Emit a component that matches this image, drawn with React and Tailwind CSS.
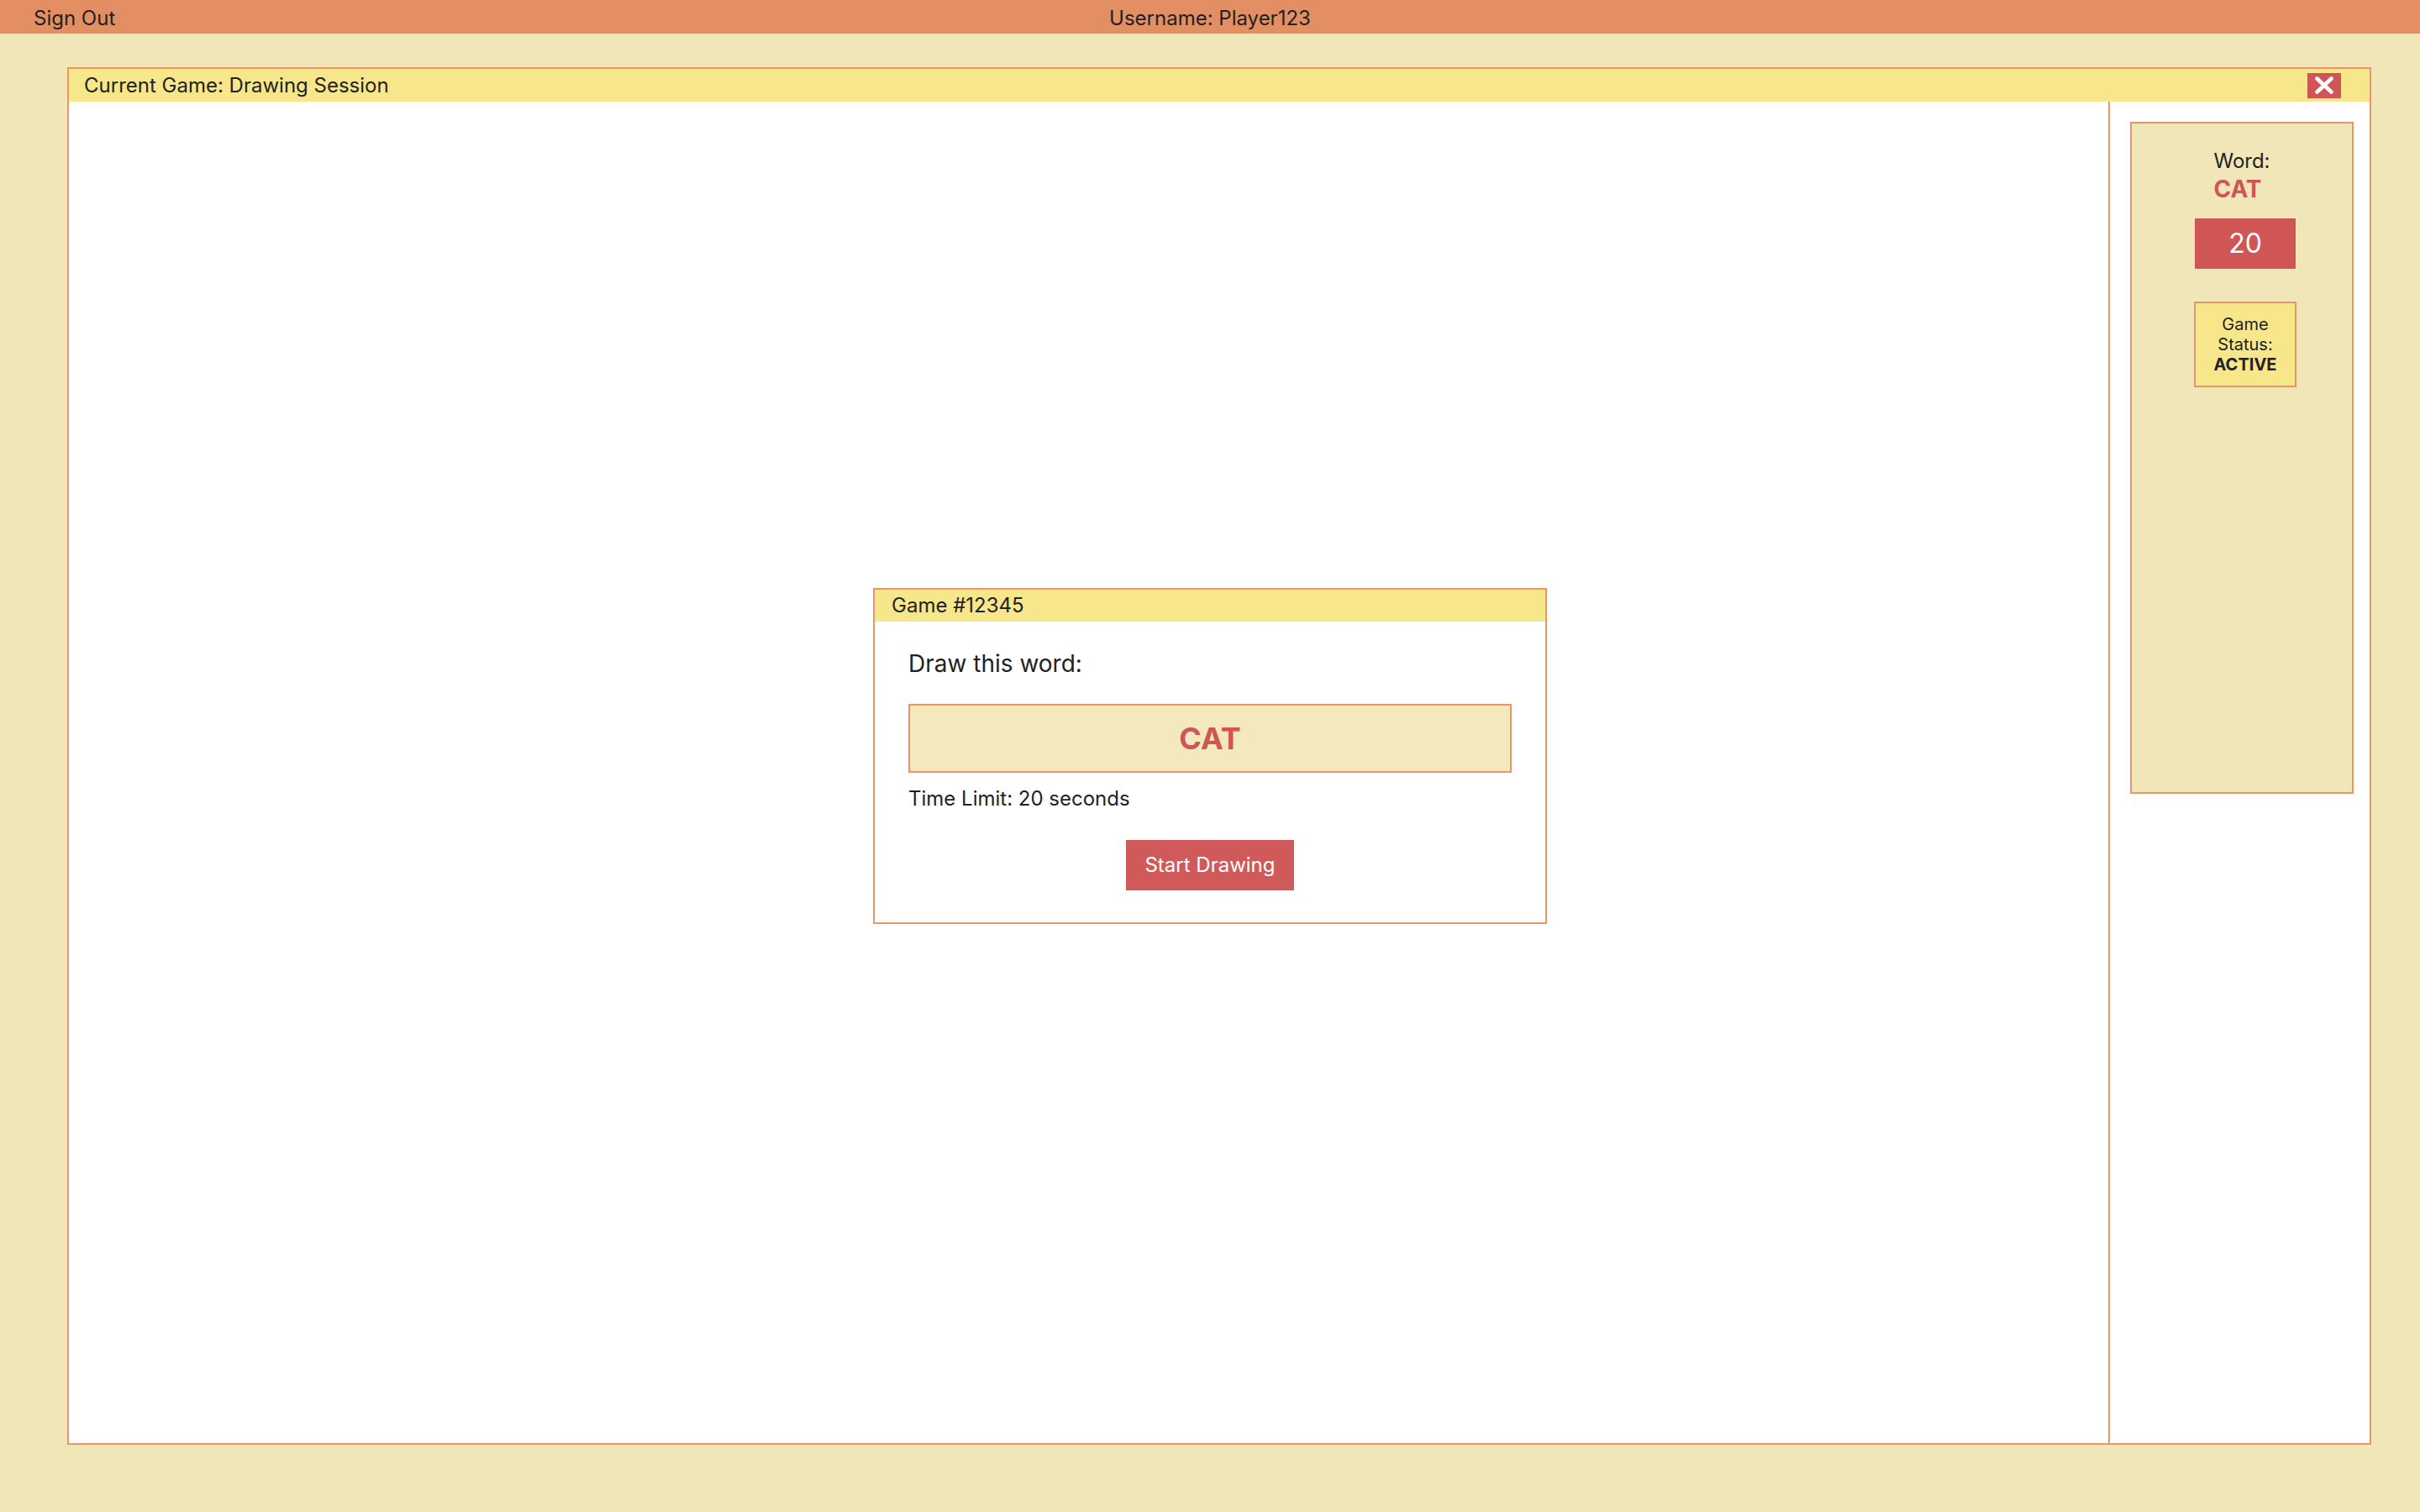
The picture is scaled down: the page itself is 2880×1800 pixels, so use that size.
import React from "react";

const CloseIcon = () => (
    <svg width="22" height="21" viewBox="0 0 22 21" fill="none">
        <path d="M2.5 2.5L19.5 18.5M19.5 2.5L2.5 18.5" stroke="white" strokeWidth="4.5" strokeLinecap="round" />
    </svg>
);

const App = () => {
    return (
        <div className="h-screen w-full flex flex-col bg-[#f0e6b8] text-[#222222] font-['Inter','Noto_Sans',sans-serif] overflow-hidden">
            {/* Top bar */}
            <header className="h-10 flex-shrink-0 bg-[#e48f63] grid grid-cols-3 px-10 pt-[3px] text-[24px] leading-[37px]">
                <span>Sign Out</span>
                <span className="text-center">Username: Player123</span>
                <span></span>
            </header>

            {/* Game window */}
            <div className="flex-1 min-h-0 mt-10 mb-20 ml-20 mr-[58px] bg-white border-2 border-[#e8956a] flex flex-col">
                <div className="h-[39px] flex-shrink-0 bg-[#f8e68a] flex items-center justify-between pl-[18px] pr-[34px]">
                    <span className="text-[24px] leading-8">Current Game: Drawing Session</span>
                    <button className="w-10 h-[30px] bg-[#d05555] flex items-center justify-center">
                        <CloseIcon />
                    </button>
                </div>

                <div className="flex-1 min-h-0 flex">
                    {/* Canvas */}
                    <div className="flex-1 bg-white border-r-2 border-[#e8956a]"></div>

                    {/* Sidebar */}
                    <aside className="w-[309px] flex-shrink-0 bg-white pl-6 pr-[19px] pt-6">
                        <div className="h-[800px] bg-[#f0e6b8] border-2 border-[#e8956a] pt-[29px] flex flex-col items-center">
                            <div className="text-left">
                                <p className="text-[24px] leading-8">Word:</p>
                                <p className="text-[28px] leading-[34px] font-bold text-[#d05555]">CAT</p>
                            </div>
                            <div className="mt-[18px] ml-2 w-[120px] h-[60px] bg-[#d05555] text-white flex items-center justify-center text-[32px]">
                                20
                            </div>
                            <div className="mt-[39px] ml-2 w-[122px] bg-[#f8e68a] border-2 border-[#e8956a] py-[13px] text-center text-[20px] leading-6">
                                <p>Game</p>
                                <p>Status:</p>
                                <p className="font-bold">ACTIVE</p>
                            </div>
                        </div>
                    </aside>
                </div>
            </div>

            {/* Modal */}
            <div className="fixed inset-0 flex items-center justify-center pointer-events-none">
                <div className="w-[802px] bg-white border-2 border-[#e8956a] pointer-events-auto">
                    <div className="h-[38px] bg-[#f8e68a] px-5 text-[24px] leading-[38px]">Game #12345</div>
                    <div className="px-10 pt-[30px] pb-[38px]">
                        <p className="text-[28px] leading-10">Draw this word:</p>
                        <div className="mt-7 h-[82px] bg-[#f3e9bd] border-2 border-[#e8956a] flex items-center justify-center text-[36px] font-bold text-[#d05555]">
                            CAT
                        </div>
                        <p className="mt-[15px] text-[24px] leading-8">Time Limit: 20 seconds</p>
                        <div className="mt-[33px] flex justify-center">
                            <button className="h-[60px] px-[22px] bg-[#d05a5a] text-white text-[24px]">Start Drawing</button>
                        </div>
                    </div>
                </div>
            </div>
        </div>
    );
};

export default App;
